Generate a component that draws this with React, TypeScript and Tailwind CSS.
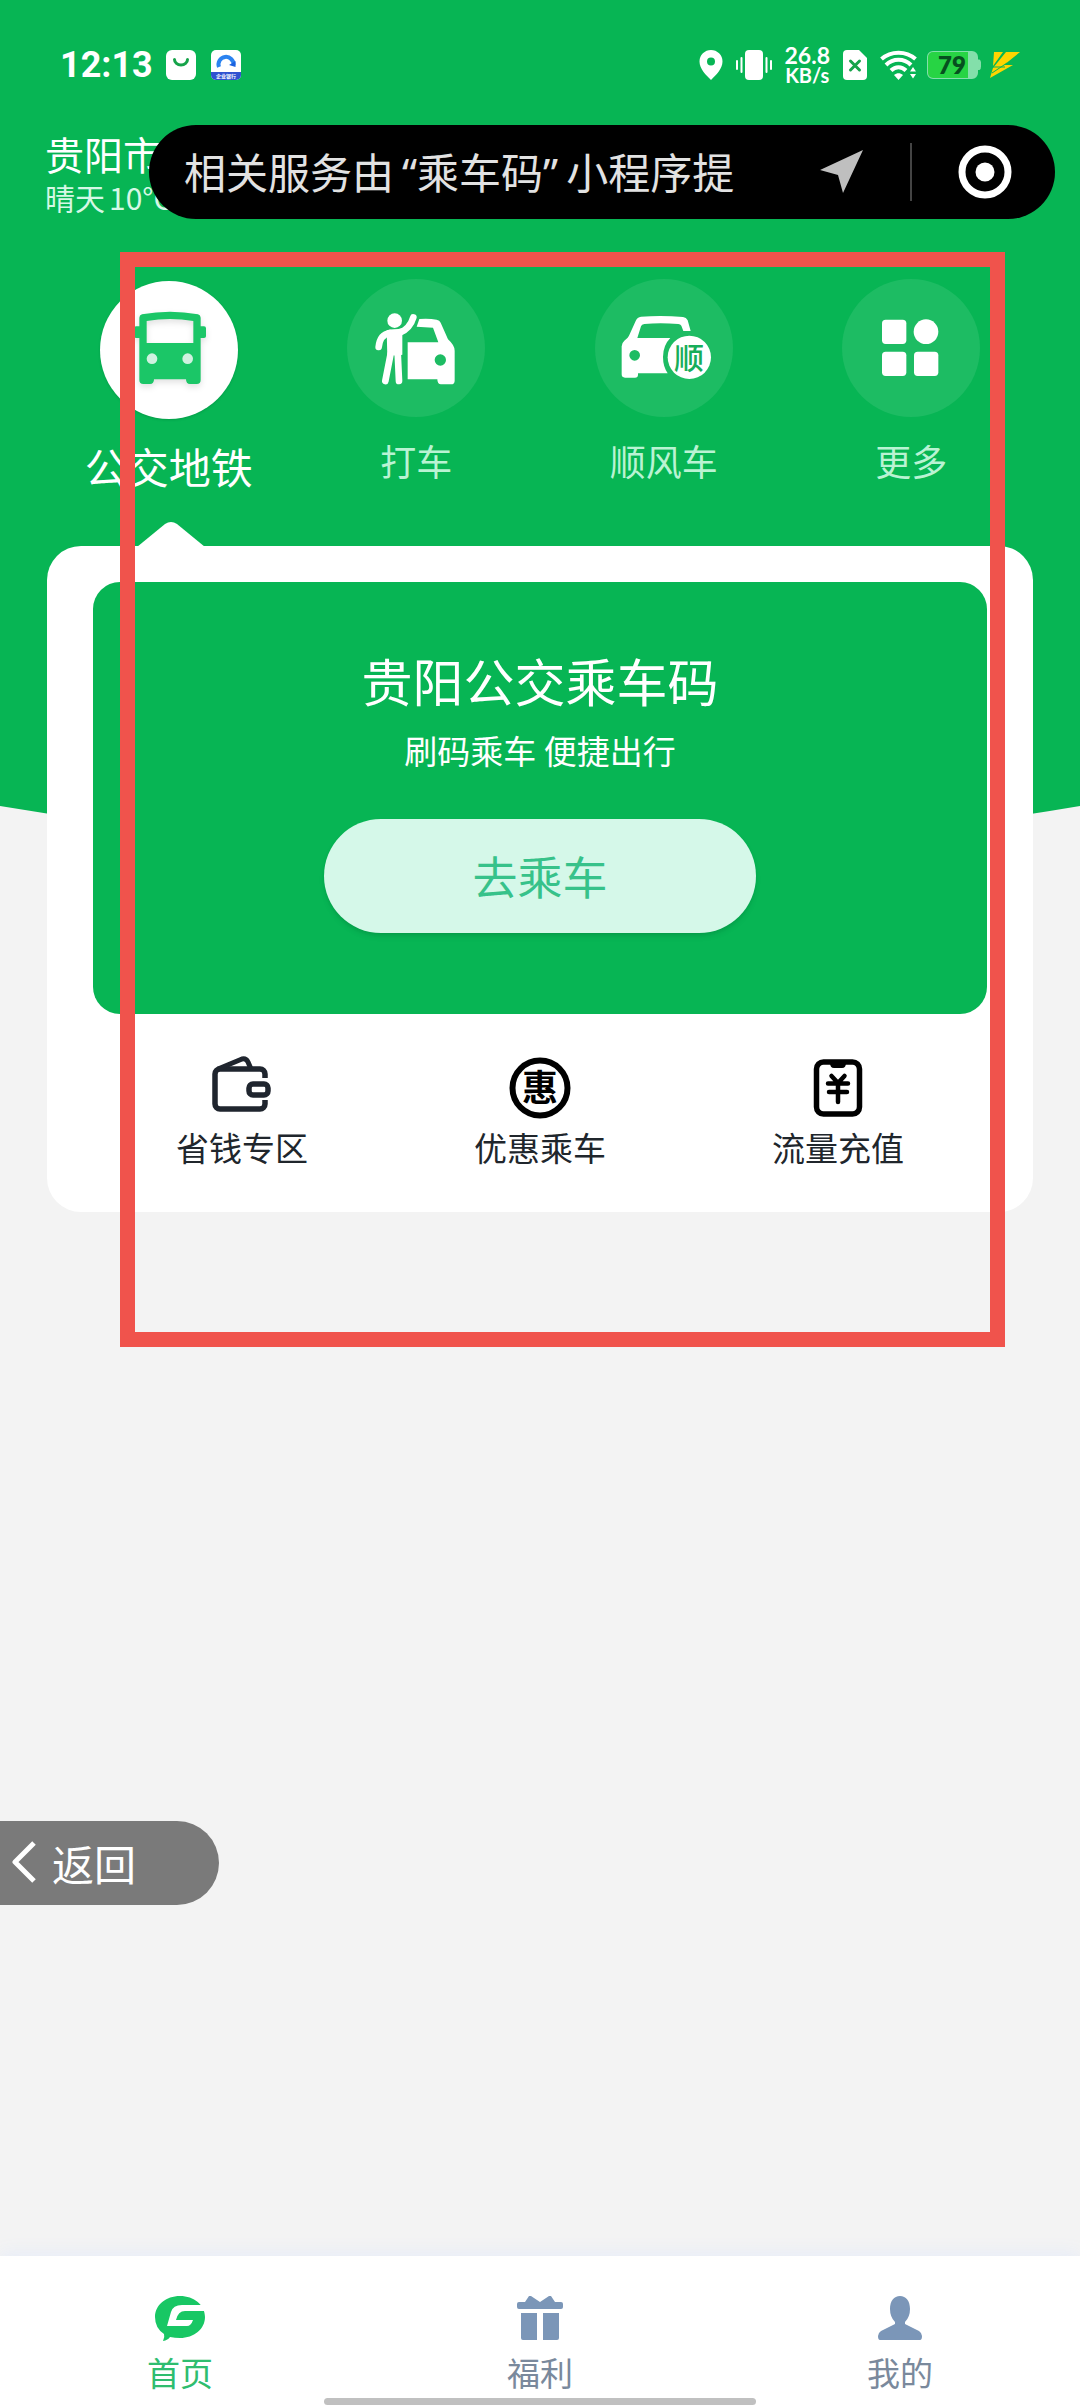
import React, { memo } from 'react';
import clsx from 'clsx';

/* ---------- 状态栏图标 ---------- */

const BagIcon = () => (
  <svg viewBox="0 0 30 30" className="size-[30px]">
    <rect width="30" height="30" rx="6" fill="#fff" />
    <path d="M8.5 9.5a6.5 5.5 0 0 0 13 0" fill="none" stroke="#16a34a" strokeWidth="3" strokeLinecap="round" />
  </svg>
);

const AppIcon = () => (
  <svg viewBox="0 0 30 30" className="size-[30px] overflow-visible">
    <rect width="30" height="30" rx="5" fill="#fff" />
    <path d="M0 22h30v3a5 5 0 0 1-5 5H5a5 5 0 0 1-5-5z" fill="#2f52d0" />
    <path d="M8 17a7.5 7.5 0 1 1 14.500 -2" fill="none" stroke="#2b83f0" strokeWidth="4" />
    <path d="M18 15l6.500-4v6z" fill="#1b62e0" />
    <text x="15" y="28" fontSize="5" fontWeight="700" fill="#fff" textAnchor="middle">企业银行</text>
  </svg>
);

const PinIcon = () => (
  <svg viewBox="0 0 24 30" className="h-[30px] w-6">
    <path fillRule="evenodd" fill="#fff" d="M12 0a11.500 11.500 0 0 1 11.500 11.500C23.500 19 17 25 12 30 7 25 .5 19 .5 11.500A11.500 11.500 0 0 1 12 0zm0 7.500a4 4 0 1 0 0 8 4 4 0 0 0 0-8z" />
  </svg>
);

const VibrateIcon = () => (
  <svg viewBox="0 0 36 30" className="h-[30px] w-9">
    <rect x="9" width="18" height="30" rx="4" fill="#fff" />
    <path d="M1 11v8M5.500 8v14M30.500 8v14M35 11v8" stroke="#fff" strokeWidth="2" strokeLinecap="round" />
  </svg>
);

const SimIcon = () => (
  <svg viewBox="0 0 24 30" className="h-[30px] w-6">
    <path d="M4 0h12l8 8v18a4 4 0 0 1-4 4H4a4 4 0 0 1-4-4V4a4 4 0 0 1 4-4z" fill="#fff" />
    <path d="M7.500 11l9 9M16.500 11l-9 9" stroke="#16a34a" strokeWidth="3" strokeLinecap="round" />
  </svg>
);

const WifiIcon = () => (
  <svg viewBox="0 0 38 30" className="h-[30px] w-[38px]">
    <g fill="none" stroke="#fff" strokeWidth="4">
      <path d="M1.500 9C11 .5 26 .5 35.500 9" />
      <path d="M6 15c7-7 18-7 25 0" />
      <path d="M11 20.500c4.500-4.500 10.500-4.500 15 0" />
    </g>
    <path d="M14 25c3-2.500 6-2.500 9 0l-4.500 5z" fill="#fff" />
    <path d="M30 21.500l3-4.500 3 4.500zM30 24h6l-3 4.500z" fill="#fff" />
  </svg>
);

const BatteryIcon = () => (
  <svg viewBox="0 0 54 28" className="h-7 w-[54px] overflow-visible">
    <path d="M6 0h39a6 6 0 0 1 6 6v2.500h1.500q1.500 1 1.500 3v4q0 3-1.500 3.500H51v3a6 6 0 0 1-6 6H6a6 6 0 0 1-6-6V6a6 6 0 0 1 6-6z" fill="#83dfaa" />
    <path d="M6 1h35v26H6a5 5 0 0 1-5-5V6a5 5 0 0 1 5-5z" fill="#27d444" />
    <text x="25" y="23" fontSize="24" fontWeight="800" fill="#06501f" textAnchor="middle" className="font-['Lato',sans-serif]">79</text>
  </svg>
);

const BoltIcon = () => (
  <svg viewBox="0 0 30 26" className="h-[26px] w-[30px]">
    <path d="M4 0h9L3 14zM16 0h14L14 13h9L0 26l3-10z" fill="#ffd400" />
    <path d="M2 21l15-10M1 15h14" stroke="#07b554" strokeWidth="1" />
  </svg>
);

/* ---------- 出行方式图标,画布与圆底同大 ---------- */

const BusIcon = () => (
  <svg viewBox="120 126 414 414" className="size-full drop-shadow-md">
    <path
      fillRule="evenodd"
      fill="#1bc667"
      d="M238 236q0-8 8-10 84-16 168 0 8 2 8 10v26h10q6 0 6 6v24q0 5-6 5h-10v126q0 12-12 12h-20q-12 0-12-14H282q0 14-12 14h-20q-12 0-12-12V297h-10q-6 0-6-5v-24q0-6 6-6h10zM260 246v66h140v-66q-70-12-140 0z"
    />
    <circle cx="276" cy="359" r="16" fill="#d0f1e0" />
    <circle cx="383" cy="359" r="16" fill="#d0f1e0" />
  </svg>
);

const TaxiIcon = () => (
  <svg viewBox="861 116 414 414" className="size-full">
    <circle cx="1004" cy="241" r="22" fill="#fff" />
    <g fill="none" stroke="#fff" strokeLinecap="round">
      <path d="M1060 231q-10 34-42 47M956 320q4-38 34-42" strokeWidth="20" />
      <path d="M992 340l-16 82M1013 335l4 87" strokeWidth="20" />
    </g>
    <path d="M980 270q10-3 22-3 14 0 25-4v80l-18 4-8-2-19 5z" fill="#fff" />
    <path
      fillRule="evenodd"
      fill="#fff"
      d="M1043 306h92l-16-44-49-3 8-23q30-2 52 2 9 1 12 9l22 50q20 18 20 34v90q0 11-11 11h-30q-11 0-11-15h-89zm98 36a17 17 0 1 0 0 34 17 17 0 0 0 0-34z"
    />
  </svg>
);

const CarpoolIcon = () => (
  <svg viewBox="106 116 414 414" className="size-full">
    <path
      fillRule="evenodd"
      fill="#fff"
      d="M186 318q0-10 8-17l10-9q4-5 6-10l18-40q5-12 16-13 65-4 126 1 10 1 14 10l9 32h-22l-6-16q-3-5-9-5-55-4-102 0-8 1-10 7l-11 35h99q-22 22-22 57 0 28 14 49h-89v4q0 9-9 9h-30q-10 0-10-10zm39 11a16 16 0 1 0 0 32 16 16 0 0 0 0-32z"
    />
    <circle cx="389" cy="351" r="65" fill="#fff" />
    <text x="388" y="386" fontSize="90" fontWeight="500" fill="#17ad5a" textAnchor="middle">顺</text>
  </svg>
);

const MoreIcon = () => (
  <svg viewBox="847 116 414 414" className="size-full" fill="#fff">
    <rect x="967" y="238" width="73" height="73" rx="11" />
    <circle cx="1099" cy="274" r="37" />
    <rect x="967" y="334" width="73" height="73" rx="11" />
    <rect x="1063" y="334" width="73" height="73" rx="11" />
  </svg>
);

/* ---------- 快捷入口图标 ---------- */

const WalletIcon = () => (
  <svg viewBox="211 1055 64 64" className="size-16" fill="none" stroke="#1f252e" strokeWidth="5.500" strokeLinejoin="round">
    <path d="M266 1078v-4a5 5 0 0 0-5-5h-40a5 5 0 0 0-5 5v30a5 5 0 0 0 5 5h40a5 5 0 0 0 5-5v-4" />
    <path d="M219 1069l24-10q4-1 6 3l3 7" strokeWidth="5" />
    <rect x="250" y="1084" width="19" height="11" rx="4" />
  </svg>
);

const DiscountIcon = () => (
  <svg viewBox="0 0 64 64" className="size-16">
    <circle cx="32" cy="33" r="27.500" fill="none" stroke="#000" strokeWidth="6" />
    <text x="32" y="46" fontSize="36" fontWeight="700" fill="#000" textAnchor="middle">惠</text>
  </svg>
);

const RechargeIcon = () => (
  <svg viewBox="0 0 64 64" className="size-16" fill="none" stroke="#000" strokeLinecap="round">
    <rect x="10.500" y="7" width="43" height="52" rx="7" strokeWidth="5.500" />
    <path d="M24 8h16q0 5-4 5h-8q-4 0-4-5z" fill="#000" stroke="none" />
    <path d="M25.500 21l6.500 7 6.500-7M32 28v19M22 28.500h20M23 37h18" strokeWidth="4.500" />
  </svg>
);

/* ---------- 底部导航图标 ---------- */

const HomeIcon = () => (
  <svg viewBox="155 2295 50 46" className="h-[46px] w-[50px]">
    <path d="M180 2296c14 0 25 9 25 21s-11 21-25 21q-5 0-10-1-2 3-7 4 2-4 1-7-9-6-9-17c0-12 11-21 25-21z" fill="#18c764" />
    <path d="M206 2305h-24q-9 0-11 7l-4 14h20q4 0 6-6h-17q2-9 9-9h21z" fill="#fff" />
  </svg>
);

const GiftIcon = () => (
  <svg viewBox="515 2295 50 46" className="h-[46px] w-[50px]" fill="#7b96b8">
    <path d="M519 2302h6l4-6h2l9 6 9-6h2l4 6h6q2 0 2 2v3q0 2-2 2h-42q-2 0-2-2v-3q0-2 2-2z" />
    <path d="M521 2313h16v27h-14q-2 0-2-2zM543 2313h16v25q0 2-2 2h-14z" />
  </svg>
);

const MineIcon = () => (
  <svg viewBox="875 2295 50 46" className="h-[46px] w-[50px]" fill="#7b96b8">
    <path d="M900 2296c6 0 10 5 10 13q0 8-5 13v2l14 7q3 2 3 5 0 4-2 4h-40q-2 0-2-4 0-3 3-5l14-7v-2q-5-5-5-13c0-8 4-13 10-13z" />
  </svg>
);

interface TravelTabProps {
  icon: React.ComponentType;
  label: string;
  active?: boolean;
}

const TravelTab = memo(function TravelTab({ icon: Icon, label, active }: TravelTabProps) {
  return (
    <button type="button" className={clsx('flex flex-col items-center', active ? 'gap-5 pt-0.5' : 'gap-4')}>
      <span className={clsx('size-[138px] rounded-full', active ? 'bg-white shadow-sm' : 'bg-[#1dbc63]')}>
        <Icon />
      </span>
      <span className={clsx('leading-[54px]', active ? 'text-[42px] text-white' : 'text-[36px] text-[#b9f3d3]')}>
        {label}
      </span>
    </button>
  );
});

const travelTabs: TravelTabProps[] = [
  { icon: BusIcon, label: '公交地铁', active: true },
  { icon: TaxiIcon, label: '打车' },
  { icon: CarpoolIcon, label: '顺风车' },
  { icon: MoreIcon, label: '更多' },
];

const shortcuts = [
  { icon: WalletIcon, label: '省钱专区' },
  { icon: DiscountIcon, label: '优惠乘车' },
  { icon: RechargeIcon, label: '流量充值' },
];

const navItems = [
  { icon: HomeIcon, label: '首页', active: true },
  { icon: GiftIcon, label: '福利', active: false },
  { icon: MineIcon, label: '我的', active: false },
];

const StatusBar = () => (
  <div className="flex h-[125px] items-center justify-between pt-1 pr-[60px] pl-[60px] text-white">
    <div className="flex items-center gap-[15px]">
      <span className="w-[91px] font-['Roboto','Noto_Sans_CJK_SC',sans-serif] text-[36px] leading-none font-bold">12:13</span>
      <BagIcon />
      <AppIcon />
    </div>
    <div className="flex items-center gap-[13px]">
      <PinIcon />
      <VibrateIcon />
      <span className="flex flex-col items-center font-['Lato','Noto_Sans_CJK_SC',sans-serif] text-[23px] leading-5 font-bold">
        <span>26.8</span>
        <span className="text-[20px]">KB/s</span>
      </span>
      <SimIcon />
      <div className="flex items-center gap-[9px]">
        <WifiIcon />
        <BatteryIcon />
        <BoltIcon />
      </div>
    </div>
  </div>
);

const Header = () => (
  <header className="relative h-[94px]">
    <div className="pt-1 pl-[45px] text-white">
      <p className="text-[39px] leading-[48px]">贵阳市</p>
      <p className="text-[30px] leading-10 text-[#d5f8e5]">
        晴天<span className="pl-1">10°C</span>
      </p>
    </div>
    {/* 胶囊提示条,盖住右侧的城市信息 */}
    <div className="absolute inset-y-0 right-[25px] left-[149px] flex items-center rounded-full bg-black pr-[43px] pl-[35px]">
      <p className="flex-1 text-[42px] leading-none whitespace-nowrap text-[#e2e2e2]">
        相关服务由<span className="pl-2 font-['Noto_Sans']">“</span>乘车码<span className="pr-2 font-['Noto_Sans']">”</span>小程序提
      </p>
      <button type="button" aria-label="定位">
        <svg viewBox="0 0 44 44" className="size-11">
          <path d="M43 0L23 43l-5-18L0 20z" fill="#bfbfbf" />
        </svg>
      </button>
      <span className="mx-[46px] h-[58px] w-0.5 bg-[#444]" />
      <button type="button" aria-label="关闭">
        <svg viewBox="0 0 54 54" className="size-[54px]">
          <circle cx="27" cy="27" r="23" fill="none" stroke="#fff" strokeWidth="7" />
          <circle cx="27" cy="27" r="9.500" fill="#fff" />
        </svg>
      </button>
    </div>
  </header>
);

const RideCard = () => (
  <section className="relative mx-[47px] rounded-[34px] bg-white px-[46px] pt-9">
    <svg viewBox="0 0 80 26" className="absolute -top-[25px] left-[84px] h-[26px] w-20">
      <path d="M6 26l28-23q6-4 12 0l28 23z" fill="#fff" />
    </svg>
    <div className="flex flex-col items-center rounded-[27px] bg-[#07b554] pt-[60px] pb-[81px] text-white">
      <h1 className="text-[51px] leading-[76px]">贵阳公交乘车码</h1>
      <p className="mt-2 text-[33px] leading-[48px]">刷码乘车 便捷出行</p>
      <button
        type="button"
        className="mt-[45px] h-[114px] w-[432px] rounded-full bg-[#d5f8e9] text-[45px] text-[#37c28a] shadow-md"
      >
        去乘车
      </button>
    </div>
    <div className="grid grid-cols-3 pt-[41px] pb-[43px]">
      {shortcuts.map(({ icon: Icon, label }) => (
        <button key={label} type="button" className="flex flex-col items-center gap-1.5">
          <Icon />
          <span className="text-[33px] leading-11 text-[#20262c]">{label}</span>
        </button>
      ))}
    </div>
  </section>
);

export default function App() {
  return (
    <div className="relative flex min-h-screen flex-col overflow-hidden bg-[#f3f3f3] font-['Noto_Sans_CJK_SC',sans-serif]">
      {/* 绿色弧形背景 */}
      <div className="absolute inset-x-0 top-0">
        <div className="h-[806px] bg-[#07b554]" />
        <svg viewBox="0 0 1080 48" preserveAspectRatio="none" className="block h-12 w-full">
          <path d="M0 0Q540 92 1080 0z" fill="#07b554" />
        </svg>
      </div>

      <main className="relative">
        <StatusBar />
        <Header />
        <div className="grid grid-cols-4 items-start px-[45px] pt-[60px] pb-[53px]">
          {travelTabs.map((tab) => (
            <TravelTab key={tab.label} {...tab} />
          ))}
        </div>
        <RideCard />
      </main>

      {/* 红色标注框 */}
      <div className="pointer-events-none absolute top-[252px] right-[75px] left-[120px] h-[1095px] border-[15px] border-[#f0534c]" />

      <button
        type="button"
        className="absolute bottom-[503px] left-0 flex h-[84px] w-[219px] items-center gap-4 rounded-r-full bg-[#7a7a7a] pb-0.5 pl-3 text-[42px] text-white"
      >
        <svg viewBox="0 0 24 42" className="h-[42px] w-6">
          <path d="M22 2L3 21l19 19" fill="none" stroke="#fff" strokeWidth="5" strokeLinejoin="round" />
        </svg>
        返回
      </button>

      <nav className="relative mt-auto grid grid-cols-3 bg-white pt-[39px] pb-3 shadow-[0_-4px_16px_#e8edf8]">
        {navItems.map(({ icon: Icon, label, active }) => (
          <a key={label} href="#" className="flex flex-col items-center gap-2">
            <Icon />
            <span className={clsx('text-[33px] leading-[47px]', active ? 'text-[#2fbd6f]' : 'text-[#7a899c]')}>{label}</span>
          </a>
        ))}
        <span className="absolute bottom-[3px] left-[30%] h-[7px] w-2/5 rounded-full bg-[#c0c0c0]" />
      </nav>
    </div>
  );
}
